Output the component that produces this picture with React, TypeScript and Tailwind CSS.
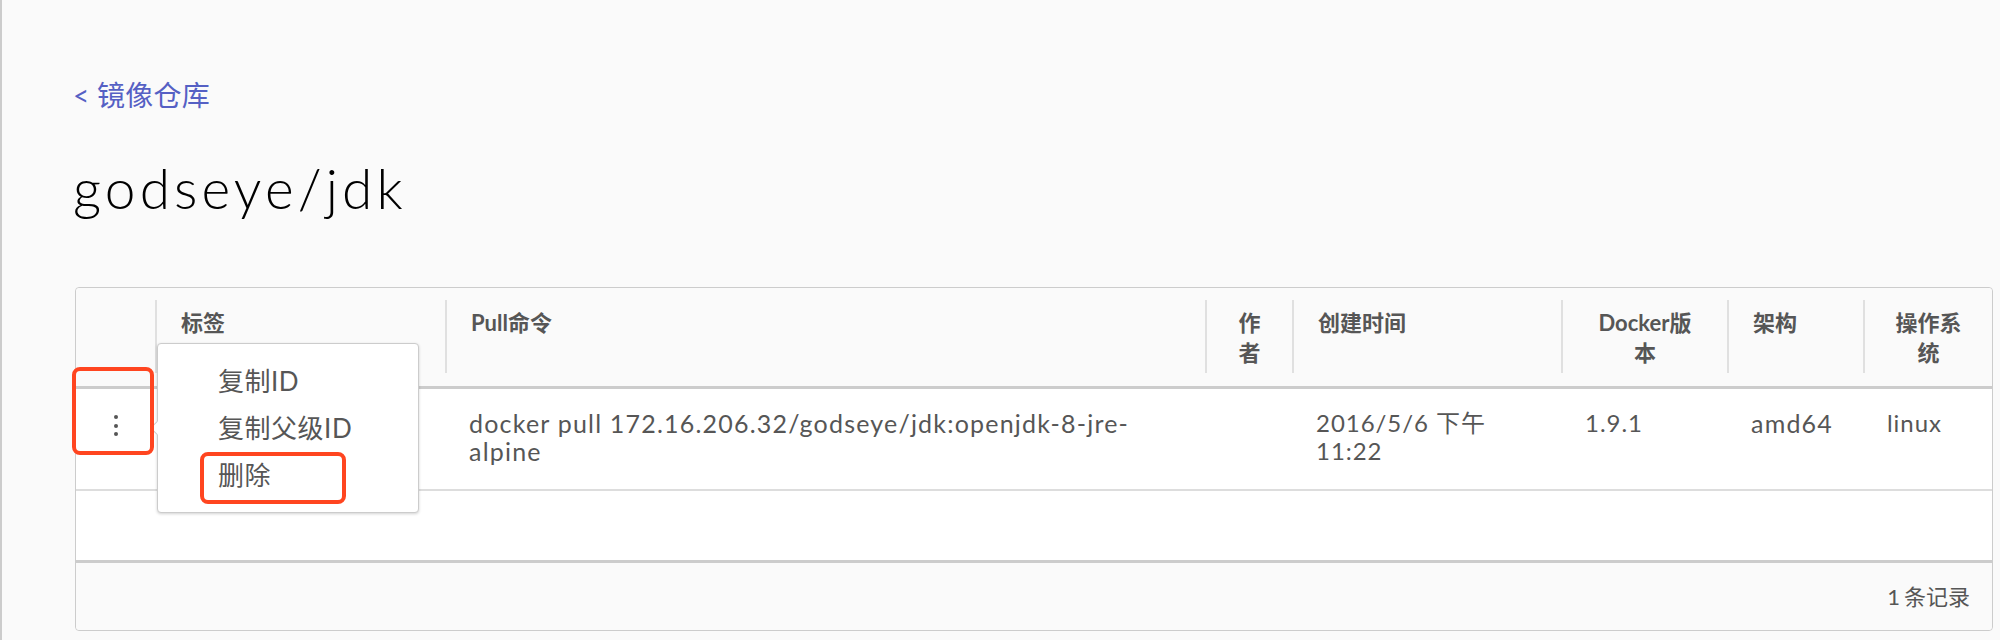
import React from "react";

const font = "font-['Lato','Noto_Sans_CJK_SC',sans-serif]";

function Th({ children, center = false, first = false }: { children?: React.ReactNode; center?: boolean; first?: boolean }) {
    return (
        <div className="pt-[12px] pb-[13px]">
            <div className={`h-[73px] px-[24px] pt-[8px] text-[22px] leading-[30px] font-bold text-[#565656] ${first ? "" : "border-l-2 border-[#e0e0e0]"} ${center ? "text-center" : ""}`}>
                {children}
            </div>
        </div>
    );
}

function Td({ children, wide = false }: { children?: React.ReactNode; wide?: boolean }) {
    return (
        <div className={`px-[24px] pt-[20px] leading-[28px] text-[#565656] ${wide ? "text-[25px] tracking-[0.048em]" : "text-[24px] tracking-[0.04em]"}`}>
            {children}
        </div>
    );
}

export default function App() {
    return (
        <div className={`min-h-[640px] bg-[#fafafa] border-l-2 border-[#cccccc] pl-[71px] pr-[7px] pt-[78px] ${font}`}>
            {/* breadcrumb */}
            <div className="text-[28px] leading-[34px] tracking-[0.01em] text-[#5560c4]">&lt; 镜像仓库</div>

            <h1 className="mt-[44px] text-[55px] leading-[64px] font-light tracking-[0.075em] text-black">godseye/jdk</h1>

            {/* datagrid */}
            <div className="relative mt-[67px] ml-[2px] rounded-[4px] border border-[#cccccc] bg-white">
                <div className="grid grid-cols-[79px_290px_760px_87px_269px_166px_136px_1fr] bg-[#fafafa] rounded-t-[4px] border-b-[3px] border-[#cccccc]">
                    <Th first />
                    <Th>标签</Th>
                    <Th>Pull命令</Th>
                    <Th center>作<br />者</Th>
                    <Th>创建时间</Th>
                    <Th center>Docker版<br />本</Th>
                    <Th>架构</Th>
                    <Th center>操作系<br />统</Th>
                </div>

                <div className="grid grid-cols-[79px_290px_760px_87px_269px_166px_136px_1fr] h-[102px] border-b-2 border-[#dddddd]">
                    <div className="flex justify-center pt-[26px]">
                        <div className="flex flex-col gap-[4.5px]">
                            <span className="w-[4px] h-[4px] rounded-full bg-[#555555]" />
                            <span className="w-[4px] h-[4px] rounded-full bg-[#555555]" />
                            <span className="w-[4px] h-[4px] rounded-full bg-[#555555]" />
                        </div>
                    </div>
                    <Td />
                    <Td wide>
                        <span className="whitespace-nowrap">docker pull 172.16.206.32/godseye/jdk:openjdk-8-jre-</span>
                        <br />alpine
                    </Td>
                    <Td />
                    <Td>
                        <span className="whitespace-nowrap">2016/5/6 下午</span>
                        <br />11:22
                    </Td>
                    <Td>1.9.1</Td>
                    <Td wide>amd64</Td>
                    <Td>linux</Td>
                </div>

                <div className="h-[69px]" />

                <div className="h-[70px] border-t-[3px] border-[#cccccc] bg-[#fafafa] rounded-b-[4px] flex items-center justify-end pr-[22px] text-[22px] text-[#565656]">
                    <span>1</span>
                    <span className="ml-[4px]">条记录</span>
                </div>

                {/* action menu */}
                <div className="absolute left-[81px] top-[55px] w-[262px] h-[170px] rounded-[4px] border border-[#cccccc] bg-white shadow-[0_1px_3px_rgba(0,0,0,0.18)] pl-[60px] pt-[14px] text-[26px] leading-[47px] tracking-[0.02em] text-[#565656]">
                    <div className="absolute -left-[6px] top-[79px] w-[10px] h-[10px] rotate-45 bg-white border-l border-b border-[#cccccc]" />
                    <div>复制ID</div>
                    <div>复制父级ID</div>
                    <div>删除</div>
                </div>

                {/* highlight marks */}
                <div className="absolute -left-[4px] top-[79px] w-[82px] h-[88px] rounded-[8px] border-4 border-[#ff4520]" />
                <div className="absolute left-[124px] top-[164px] w-[146px] h-[52px] rounded-[8px] border-4 border-[#ff4520]" />
            </div>
        </div>
    );
}
